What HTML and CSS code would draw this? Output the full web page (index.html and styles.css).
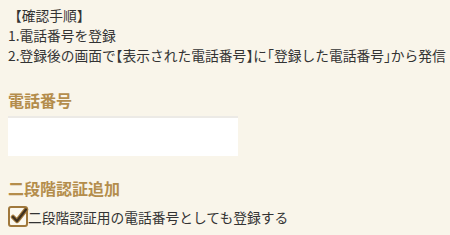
FILE: index.html
```html
<!DOCTYPE html>
<html lang="ja">
<head>
    <meta charset="UTF-8">
    <title>電話番号登録</title>
    <link rel="stylesheet" href="styles.css">
</head>
<body>
<div class="steps">
    <p>【確認手順】</p>
    <p>1.電話番号を登録</p>
    <p>2.登録後の画面で<span class="br">【</span>表示された電話番号<span class="br">】</span>に<span class="br">「</span>登録した電話番号<span class="br">」</span>から発信</p>
</div>
<div class="field">
    <h3 class="label">電話番号</h3>
    <input type="text" class="tel">
</div>
<div class="field second">
    <h3 class="label">二段階認証追加</h3>
    <label class="check">
        <span class="box">
            <svg width="20" height="20" viewBox="0 0 20 20">
                <path d="M4 11 L8 15 L17 3.5" fill="none" stroke="#a0783c" stroke-width="4.5" stroke-linecap="round" stroke-linejoin="round"/>
                <path d="M4 11 L8 15 L17 3.5" fill="none" stroke="#3e3020" stroke-width="2.2" stroke-linecap="round" stroke-linejoin="round"/>
            </svg>
        </span>
        <span>二段階認証用の電話番号としても登録する</span>
    </label>
</div>
</body>
</html>
```

FILE: styles.css
```css
*{
    margin: 0;
    padding: 0;
    box-sizing: border-box;
}
body{
    background: #f9f5ea;
    font-family: "Noto Sans CJK JP", "Noto Sans", sans-serif;
    font-size: 13.75px;
    color: #333;
    padding: 5px 8px;
}
.steps p{
    line-height: 20px;
    white-space: nowrap;
}
.br{
    font-feature-settings: "halt";
}
.field{
    margin-top: 25px;
}
.field.second{
    margin-top: 22px;
}
.label{
    font-size: 16px;
    font-weight: bold;
    color: #b48d4c;
    line-height: 20px;
    margin-bottom: 6px;
}
.second .label{
    margin-bottom: 8px;
}
.tel{
    display: block;
    width: 230px;
    height: 40px;
    background: #fff;
    border: none;
    border-top: 2px solid #eceae6;
    outline: none;
}
.check{
    display: flex;
    align-items: center;
    line-height: 20px;
}
.box{
    position: relative;
    width: 20px;
    height: 21px;
    border: 2px solid #a0783c;
    border-radius: 3px;
    background: #fbf8ef;
    flex-shrink: 0;
}
.box svg{
    position: absolute;
    left: -1px;
    top: -2px;
}
```
